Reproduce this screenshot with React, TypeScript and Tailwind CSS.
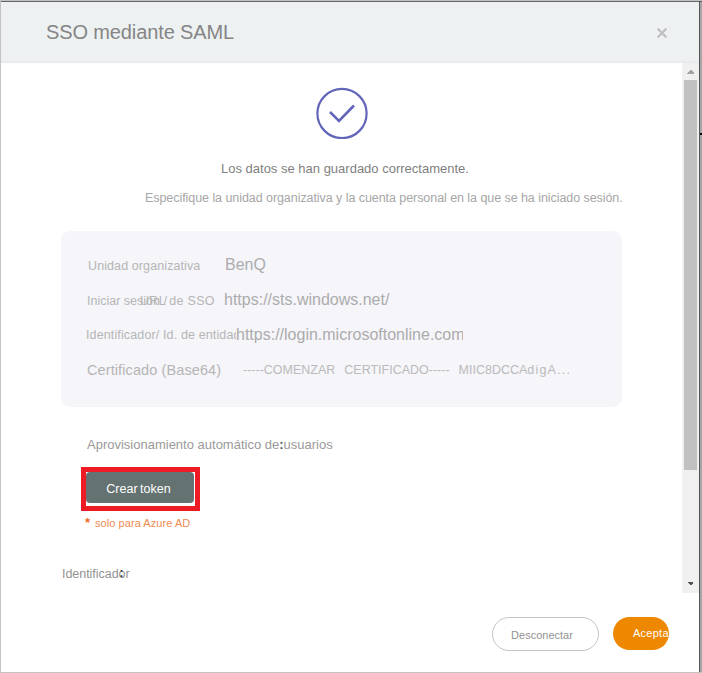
import React from "react";

function Header() {
  return (
    <header className="flex h-[61px] shrink-0 items-center justify-between border-b-2 border-[#e9eaed] bg-[#edf1f2] pr-[32px] pl-[45px]">
      <h1 className="text-[20px] leading-[24px] tracking-[-0.12px] text-[#858585]">SSO mediante SAML</h1>
      <svg className="mt-[2px] h-[10px] w-[10px]" viewBox="0 0 10 10" fill="none" stroke="#bfbfbf" strokeWidth="2.2">
        <path d="M.6 .6 9.4 9.4M9.4 .6 .6 9.4" />
      </svg>
    </header>
  );
}

function Scrollbar() {
  return (
    <div className="flex h-[530px] w-[17px] flex-col items-center bg-[#f0f0f0]">
      <svg className="mt-[7px] h-[4px] w-[7px]" viewBox="0 0 7 4" fill="#a3a3a3" shapeRendering="crispEdges"><path d="M0 4V3L3 0H4L7 3V4z" /></svg>
      <div className="mt-[6px] h-[390px] w-[13px] bg-[#c1c1c1]" />
      <svg className="mt-auto mb-[8px] h-[3px] w-[5px]" viewBox="0 0 5 3" fill="#505050" shapeRendering="crispEdges"><path d="M0 0H5V1L3 3H2L0 1z" /></svg>
    </div>
  );
}

function Details() {
  return (
    <section className="mt-[23px] ml-[60px] flex h-[176px] w-[561px] flex-col rounded-[9px] bg-[#f5f5fa] pt-[22px] text-[12.5px] whitespace-pre text-[#b5b5b5]">
      <div className="flex h-[35px] pl-[27px] leading-[26px]">
        <span className="w-[137px] tracking-[0.1px]">Unidad organizativa</span>
        <span className="text-[16px] leading-[24px] text-[#acacac]">BenQ</span>
      </div>
      <div className="flex h-[35px] pl-[26px] leading-[26px]">
        <span className="relative w-[137px]">
          Iniciar sesión /
          <span className="absolute top-0 left-[53px] tracking-[0.3px]">URL de SSO</span>
        </span>
        <span className="text-[16px] leading-[24px] text-[#acacac]">https://sts.windows.net/</span>
      </div>
      <div className="flex h-[35px] pl-[25px] leading-[24px]">
        <span className="w-[150px] overflow-hidden tracking-[0.13px]">Identificador/ Id. de entidad</span>
        <span className="w-[227px] overflow-hidden text-[16px] text-[#acacac]">https://login.microsoftonline.com</span>
      </div>
      <div className="flex h-[35px] pl-[26px] leading-[24px]">
        <span className="w-[156px] text-[14.5px] tracking-[0.1px]">Certificado (Base64)</span>
        <span className="leading-[24px] text-[#bababa]">
          <span className="[word-spacing:1px]">-----COMENZAR  CERTIFICADO-----  MIIC8DCCA</span>
          <span className="tracking-[1.2px]">digA...</span>
        </span>
      </div>
    </section>
  );
}

export default function App() {
  return (
    <div className="flex h-[673px] w-[702px] border border-r-0 border-[#c3c3c3] bg-white font-['Liberation_Sans',Arial,sans-serif]">
      <main className="flex w-[698px] flex-col border-t border-[#666666]">
        <Header />
        <div className="flex h-[530px] shrink-0">
          <div className="flex w-[681px] flex-col">
            <svg className="mt-[24px] ml-[315px] h-[52px] w-[52px] shrink-0" viewBox="0 0 52 52" fill="none" stroke="#6366b8">
              <circle cx="26" cy="26.5" r="24.6" strokeWidth="2.2" />
              <path d="M14 25 23 34 38 18.5" strokeWidth="2.6" />
            </svg>
            <p className="mt-[20px] ml-[220px] text-[13px] leading-[20px] whitespace-nowrap text-[#7f7f7f]">Los datos se han guardado correctamente.</p>
            <p className="mt-[9px] ml-[144px] text-[12.5px] leading-[20px] tracking-[-0.06px] whitespace-nowrap text-[#a6a6a6]">Especifique la unidad organizativa y la cuenta personal en la que se ha iniciado sesión.</p>
            <Details />
            <p className="mt-[28px] ml-[86px] text-[13px] leading-[20px] text-[#999999]">
              Aprovisionamiento automático de<b className="text-[#555]">:</b>usuarios
            </p>
            <div className="mt-[12px] ml-[80px] flex h-[44px] w-[119px] items-start border-[5px] border-[#ed1c24] bg-white">
              <button className="h-[31px] w-[108px] rounded-[4px] bg-[#647271] pt-[3px] pr-[3px] text-[12.5px] text-white [word-spacing:-1px]">Crear token</button>
            </div>
            <p className="mt-[2px] ml-[84px] flex gap-[5px] text-[11px] leading-[20px] text-[#ee8a52]">
              <b className="text-[13px] text-[#ee6c1f]">*</b>
              <span className="tracking-[0.06px]">solo para Azure AD</span>
            </p>
            <p className="mt-[31px] ml-[61px] text-[12.5px] leading-[20px] tracking-[-0.04px] text-[#929292]">
              Identificad
              <span className="relative">
                o<b className="absolute -top-[4px] left-[1px] text-[12px] leading-[20px] text-[#333]">:</b>
              </span>
              r
            </p>
          </div>
          <Scrollbar />
        </div>
        <footer className="flex pt-[24px] pl-[491px]">
          <button className="h-[34px] w-[107px] rounded-full border-[1.5px] border-[#c4c4c4] pt-[2px] pr-[7px] text-[11px] text-[#929292]">Desconectar</button>
          <button className="ml-[14px] h-[33px] w-[56px] overflow-hidden rounded-full bg-[#ed8800] pl-[20px] text-left text-[11px] tracking-[0.25px] text-white">Aceptar</button>
        </footer>
      </main>
      <div className="flex w-[3px] flex-col border-t border-l border-[#555555] bg-[#a6a6a6]">
        <div className="mt-[131px] h-[2px] bg-black" />
      </div>
    </div>
  );
}
